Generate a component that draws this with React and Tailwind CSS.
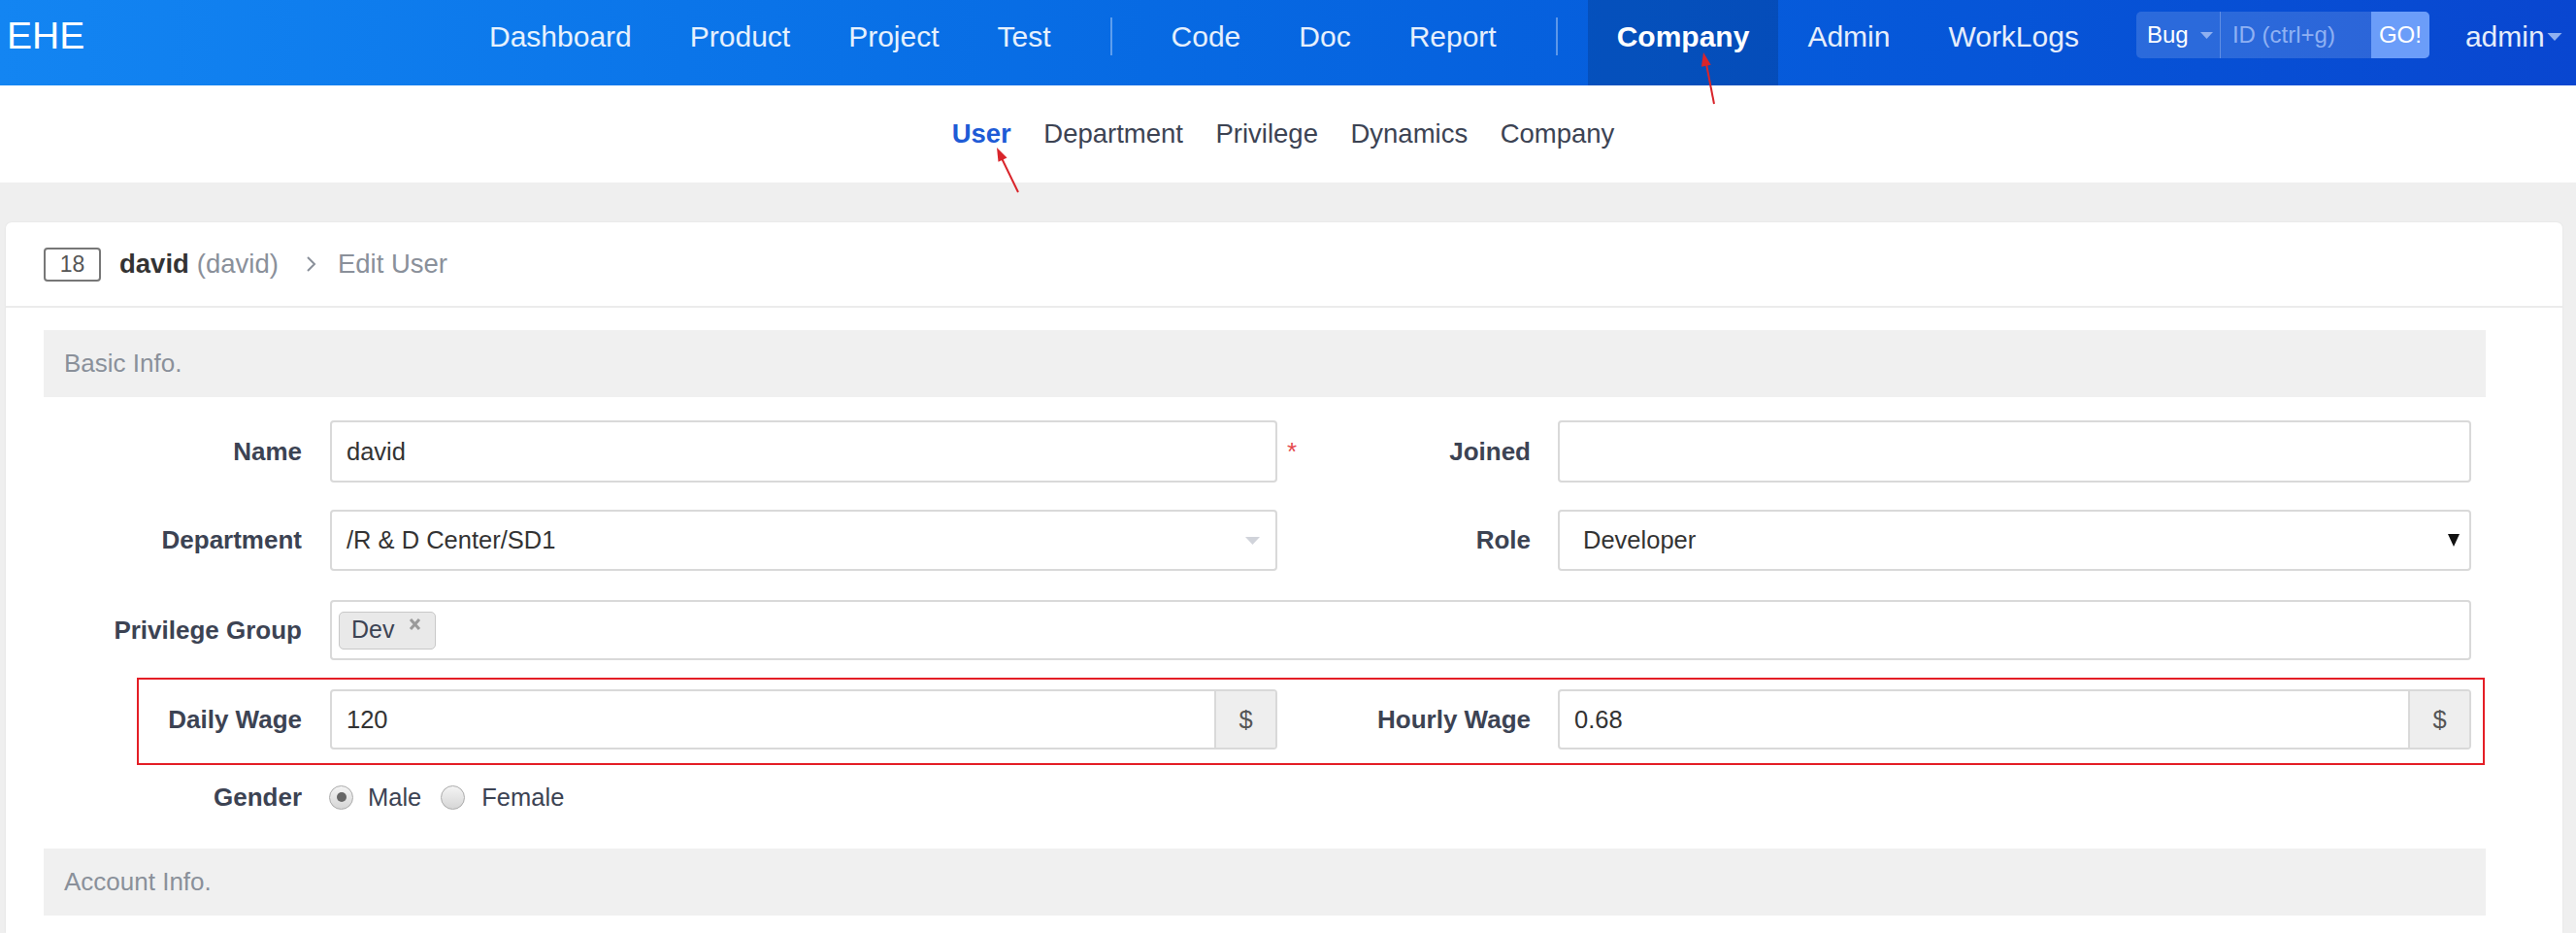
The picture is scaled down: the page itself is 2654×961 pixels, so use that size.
import React from "react";

const navLeft = ["Dashboard", "Product", "Project", "Test"];
const navMid = ["Code", "Doc", "Report"];
const navRight = ["Admin", "WorkLogs"];
const subNav = ["User", "Department", "Privilege", "Dynamics", "Company"];

const NavItem = ({ label, active }) => (
  <div
    className={`h-full flex items-center px-[30px] pb-[14px] text-[30px] ${
      active ? "bg-black/15 font-bold text-white" : "text-white/90"
    }`}
  >
    {label}
  </div>
);

const NavDivider = () => (
  <div className="self-start mt-[18px] mx-[31px] w-[2px] h-[39px] bg-white/35" />
);

const Label = ({ children }) => (
  <div className="w-[266px] shrink-0 text-right font-bold text-[26px] text-[#3c4353]">
    {children}
  </div>
);

const Box = ({ className = "", children }) => (
  <div
    className={`h-full border-2 border-[#d9d9d9] rounded-[4px] flex items-center bg-white text-[25.5px] text-[#333] ${className}`}
  >
    {children}
  </div>
);

const Caret = ({ className }) => (
  <svg width="15" height="8" viewBox="0 0 15 8" className={className}>
    <path d="M0 0 L15 0 L7.5 8 Z" fill="currentColor" />
  </svg>
);

const Addon = () => (
  <div className="w-[63px] h-full shrink-0 flex items-center justify-center bg-[#eeeeee] border-l-2 border-[#d9d9d9] text-[25.5px] text-[#555]">
    $
  </div>
);

const Radio = ({ checked }) => (
  <div className="w-[25px] h-[25px] rounded-full border border-[#aaaaaa] bg-linear-to-b from-[#f4f4f4] to-[#d6d6d6] flex items-center justify-center">
    {checked && <div className="w-[10px] h-[10px] rounded-full bg-[#666]" />}
  </div>
);

const SectionBar = ({ children }) => (
  <div className="h-[69px] bg-[#f0f0f0] flex items-center pl-[21px] text-[26px] text-[#8a909a]">
    {children}
  </div>
);

export default function App() {
  return (
    <div className="relative h-[961px] overflow-hidden flex flex-col font-['Liberation_Sans',Arial,sans-serif] bg-[#efefef]">
      {/* top bar */}
      <header className="h-[88px] shrink-0 flex bg-linear-to-r from-[#1385f2] to-[#0946d0]">
        <div className="w-[474px] shrink-0 pl-[7px] pb-[14px] flex items-center text-[39px] text-white">
          EHE
        </div>
        {navLeft.map((n) => (
          <NavItem key={n} label={n} />
        ))}
        <NavDivider />
        {navMid.map((n) => (
          <NavItem key={n} label={n} />
        ))}
        <NavDivider />
        <NavItem label="Company" active />
        {navRight.map((n) => (
          <NavItem key={n} label={n} />
        ))}
        <div className="self-start mt-[12px] ml-[29px] h-[48px] flex rounded-[5px] overflow-hidden bg-white/15 text-[24px]">
          <div className="w-[87px] pl-[11px] flex items-center border-r border-white/25 text-white">
            <span>Bug</span>
            <Caret className="ml-[12px] w-[13px] h-[7px] text-[#8fb0f0]" />
          </div>
          <div className="w-[155px] pl-[12px] flex items-center text-[#8fb1f3]">
            ID (ctrl+g)
          </div>
          <div className="w-[60px] flex items-center justify-center bg-[#6b9df9] text-white">
            GO!
          </div>
        </div>
        <div className="ml-[37px] pb-[14px] flex items-center text-[30px] text-white/90">
          <span>admin</span>
          <Caret className="ml-[2px] mt-[2px] w-[16px] h-[8px] text-[#8fb0f0]" />
        </div>
      </header>

      {/* sub nav */}
      <nav className="h-[100px] shrink-0 bg-white flex justify-center items-center gap-[33.5px] pr-[10px] text-[27.5px] text-[#3c4353]">
        {subNav.map((n, i) => (
          <span key={n} className={i === 0 ? "font-bold text-[#1e5bd6]" : ""}>
            {n}
          </span>
        ))}
      </nav>

      {/* content */}
      <main className="flex-1 pt-[41px] pl-[6px] pr-[14px]">
        <div className="h-full bg-white rounded-t-[6px] shadow-[0_0_2px_rgba(0,0,0,0.08)]">
          <div className="h-[88px] flex items-center pl-[39px] border-b-2 border-[#ececec] text-[27.5px]">
            <div className="w-[59px] h-[35px] border-2 border-[#777] rounded-[4px] flex items-center justify-center text-[23px] text-[#555]">
              18
            </div>
            <span className="ml-[19px] font-bold text-[#333]">david</span>
            <span className="ml-[8px] text-[#8a909a]">(david)</span>
            <svg width="13" height="18" viewBox="0 0 13 18" className="ml-[27px]">
              <path d="M3 2 L10 9 L3 16" fill="none" stroke="#8a909a" strokeWidth="2" />
            </svg>
            <span className="ml-[21px] text-[#8a909a]">Edit User</span>
          </div>

          <div className="pl-[39px] pr-[79px] pt-[23px]">
            <SectionBar>Basic Info.</SectionBar>

            {/* Name / Joined */}
            <div className="mt-[24px] h-[64px] flex items-center">
              <Label>Name</Label>
              <Box className="ml-[29px] w-[976px] px-[15px]">david</Box>
              <div className="w-[261px] shrink-0 flex items-center justify-between">
                <span className="ml-[10px] text-[26px] text-[#e5484d]">*</span>
                <span className="font-bold text-[26px] text-[#3c4353]">Joined</span>
              </div>
              <Box className="ml-[28px] w-[941px] px-[15px]" />
            </div>

            {/* Department / Role */}
            <div className="mt-[28px] h-[63px] flex items-center">
              <Label>Department</Label>
              <Box className="ml-[29px] w-[976px] pl-[15px] pr-[16px] justify-between">
                <span>/R &amp; D Center/SD1</span>
                <Caret className="text-[#d0d3da]" />
              </Box>
              <div className="w-[261px] shrink-0 text-right font-bold text-[26px] text-[#3c4353]">
                Role
              </div>
              <Box className="ml-[28px] w-[941px] pl-[24px] pr-[10px] justify-between">
                <span>Developer</span>
                <svg width="12" height="13" viewBox="0 0 12 13">
                  <path d="M0 0 L12 0 L6 13 Z" fill="#111" />
                </svg>
              </Box>
            </div>

            {/* Privilege Group */}
            <div className="mt-[30px] h-[62px] flex items-center">
              <Label>Privilege Group</Label>
              <Box className="ml-[29px] w-[2206px] pl-[7px]">
                <div className="h-[39px] flex items-center pl-[12px] pr-[13px] border border-[#c8c8c8] bg-[#e9e9e9] rounded-[5px] text-[25px] text-[#3c4353]">
                  <span>Dev</span>
                  <svg width="15" height="12" viewBox="0 0 15 12" className="ml-[14px] mb-[12px]">
                    <path d="M3 1 L12 11 M12 1 L3 11" stroke="#9a9a9a" strokeWidth="3" />
                  </svg>
                </div>
              </Box>
            </div>

            {/* Wages */}
            <div className="relative mt-[30px] h-[62px] flex items-center">
              <Label>Daily Wage</Label>
              <Box className="ml-[29px] w-[976px] overflow-hidden">
                <span className="flex-1 px-[15px]">120</span>
                <Addon />
              </Box>
              <div className="w-[261px] shrink-0 text-right font-bold text-[26px] text-[#3c4353]">
                Hourly Wage
              </div>
              <Box className="ml-[28px] w-[941px] overflow-hidden">
                <span className="flex-1 px-[15px]">0.68</span>
                <Addon />
              </Box>
              <div className="absolute left-[96px] -top-[12px] w-[2419px] h-[90px] border-2 border-[#e41e26] pointer-events-none" />
            </div>

            {/* Gender */}
            <div className="mt-[29px] h-[40px] flex items-center text-[25.5px] text-[#3c4353]">
              <Label>Gender</Label>
              <div className="ml-[28px]">
                <Radio checked />
              </div>
              <span className="ml-[15px]">Male</span>
              <div className="ml-[20px]">
                <Radio />
              </div>
              <span className="ml-[17px]">Female</span>
            </div>

            <div className="mt-[33px]">
              <SectionBar>Account Info.</SectionBar>
            </div>
          </div>
        </div>
      </main>

      {/* annotation arrows */}
      <svg
        className="absolute top-0 left-0 pointer-events-none"
        width="2654"
        height="961"
        viewBox="0 0 2654 961"
      >
        <line x1="1766" y1="107" x2="1758" y2="66" stroke="#d9252b" strokeWidth="2" />
        <polygon points="1755,54 1762.7,66.7 1752.9,68.7" fill="#d9252b" />
        <line x1="1049" y1="198" x2="1032" y2="163" stroke="#d9252b" strokeWidth="2" />
        <polygon points="1027,152 1037.5,162.4 1028.5,166.8" fill="#d9252b" />
      </svg>
    </div>
  );
}
